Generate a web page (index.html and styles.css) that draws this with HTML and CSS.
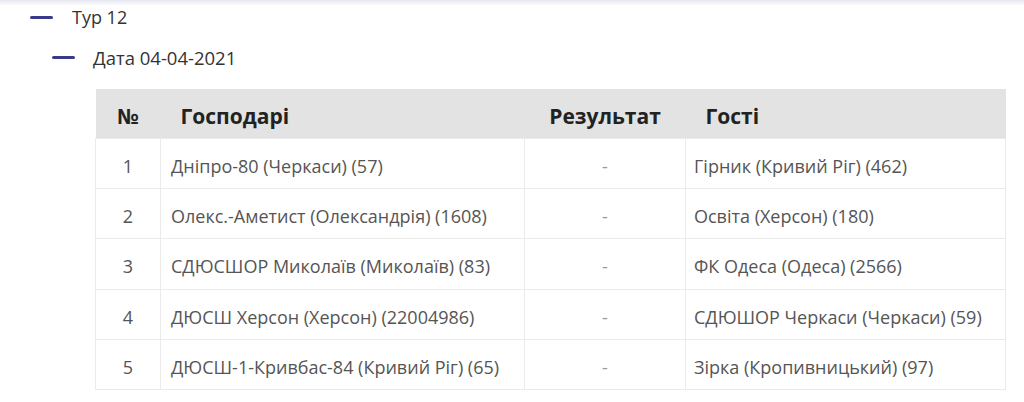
FILE: index.html
```html
<!DOCTYPE html>
<html>
<head>
    <meta charset="UTF-8">
    <title>Тур 12</title>
    <link rel="stylesheet" href="styles.css">
</head>
<body>
    <div class="shade"></div>
    <div class="tour">
        <span class="dash"></span>
        <span class="tour-title">Тур 12</span>
    </div>
    <div class="date">
        <span class="dash"></span>
        <span class="date-title">Дата 04-04-2021</span>
    </div>

    <table class="games">
        <colgroup>
            <col class="col-num">
            <col class="col-home">
            <col class="col-result">
            <col class="col-guest">
        </colgroup>
        <thead>
            <tr>
                <th class="num">№</th>
                <th class="home">Господарі</th>
                <th class="result">Результат</th>
                <th class="guest">Гості</th>
            </tr>
        </thead>
        <tbody>
            <tr>
                <td class="num">1</td>
                <td class="home">Дніпро-80 (Черкаси) (57)</td>
                <td class="result">-</td>
                <td class="guest">Гірник (Кривий Ріг) (462)</td>
            </tr>
            <tr>
                <td class="num">2</td>
                <td class="home">Олекс.-Аметист (Олександрія) (1608)</td>
                <td class="result">-</td>
                <td class="guest">Освіта (Херсон) (180)</td>
            </tr>
            <tr>
                <td class="num">3</td>
                <td class="home">СДЮСШОР Миколаїв (Миколаїв) (83)</td>
                <td class="result">-</td>
                <td class="guest">ФК Одеса (Одеса) (2566)</td>
            </tr>
            <tr>
                <td class="num">4</td>
                <td class="home">ДЮСШ Херсон (Херсон) (22004986)</td>
                <td class="result">-</td>
                <td class="guest">СДЮШОР Черкаси (Черкаси) (59)</td>
            </tr>
            <tr>
                <td class="num">5</td>
                <td class="home">ДЮСШ-1-Кривбас-84 (Кривий Ріг) (65)</td>
                <td class="result">-</td>
                <td class="guest">Зірка (Кропивницький) (97)</td>
            </tr>
        </tbody>
    </table>
</body>
</html>
```

FILE: styles.css
```css
/* Загальні стилі */
body {
    margin: 0;
    font-family: "Open Sans", "Noto Sans", sans-serif;
    background-color: #ffffff;
    color: #333333;
}
.shade {
    height: 6px;
    background: linear-gradient(#e6e6f2, #ffffff);
}
.tour,
.date {
    display: flex;
    align-items: center;
    height: 22px;
}
.tour {
    padding-left: 30px;
}
.date {
    padding-left: 52px;
    margin-top: 18px;
}
.dash {
    display: inline-block;
    width: 23px;
    height: 3px;
    border-radius: 2px;
    background-color: #3a3a88;
}
.tour-title {
    margin-left: 19px;
    font-size: 18px;
}
.date-title {
    margin-left: 18px;
    font-size: 18.5px;
}

/* Таблиця матчів */
.games {
    margin: 21px 0 0 95px;
    width: 910px;
    border-collapse: collapse;
    table-layout: fixed;
}
.col-num {
    width: 65px;
}
.col-home {
    width: 364px;
}
.col-result {
    width: 161px;
}
.col-guest {
    width: 320px;
}
.games th,
.games td {
    box-sizing: border-box;
}
.games th {
    height: 49px;
    padding: 5px 0 0 20px;
    background-color: #e3e3e3;
    color: #222222;
    font-size: 21px;
    font-weight: 700;
    text-align: left;
}
.games td {
    height: 50.4px;
    padding: 5px 0 0 10px;
    border: 1px solid #ebebeb;
    color: #555555;
    font-size: 18px;
}
.games .num {
    padding-left: 0;
    text-align: center;
}
.games .result {
    padding-left: 0;
    text-align: center;
}
.games td.result {
    color: #999999;
}
.games td.guest {
    padding-left: 8px;
}
```
